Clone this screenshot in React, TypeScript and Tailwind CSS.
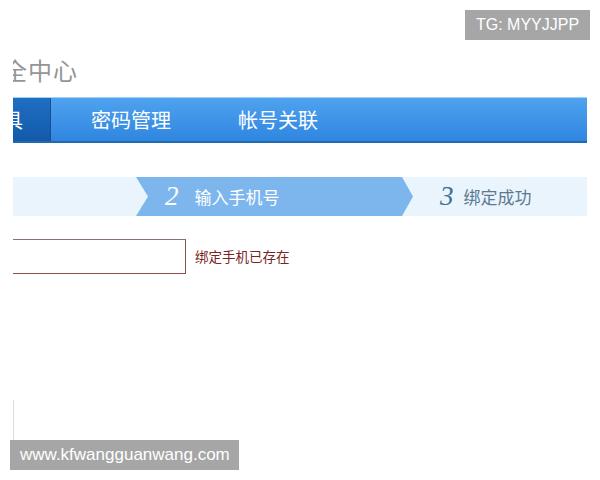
const cjk = "font-['Noto_Sans_CJK_SC','Noto_Sans',sans-serif]"

const Watermark = ({ text, className }: { text: string; className: string }) => (
    <div
        className={`absolute bg-[#a6a6a6] text-white leading-[30px] font-['Liberation_Sans',Arial,sans-serif] ${className}`}
    >
        {text}
    </div>
)

export default function App() {
    return (
        <div className={`relative w-[600px] h-[480px] overflow-hidden bg-white ${cjk}`}>
            <div className="ml-[13px] w-[574px] pt-[54px] overflow-hidden">
                {/* Title, cut off on the left */}
                <div className="ml-[-35px] h-[32px] leading-[32px] text-[24px] tracking-[1px] text-[#959595] whitespace-nowrap">
                    安全中心
                </div>

                {/* Nav tabs */}
                <div className="mt-[11px] h-[46px] flex border-t border-t-[#9fd3f6] border-b-2 border-b-[#2369b0] bg-gradient-to-b from-[#4ea2ef] to-[#2f86e0] text-white text-[20px]">
                    <div className="ml-[-82px] w-[120px] flex items-center justify-end pr-[27px] bg-gradient-to-b from-[#1f6fc4] to-[#135aa8] border-r border-r-[#1a4f8f] whitespace-nowrap">
                        安全工具
                    </div>
                    <div className="ml-[40px] flex items-center whitespace-nowrap">密码管理</div>
                    <div className="ml-[67px] flex items-center whitespace-nowrap">帐号关联</div>
                </div>

                {/* Steps */}
                <div className="mt-[34px] h-[39px] flex bg-[#eaf4fd]">
                    <div className="w-[123px] shrink-0" />
                    <div className="w-[277px] shrink-0 flex items-center pl-[29px] bg-[#7cb6ec] text-white [clip-path:polygon(0_0,266px_0,100%_50%,266px_100%,0_100%,12px_50%)]">
                        <span className="text-[27px] italic font-['Liberation_Serif',serif] leading-none">2</span>
                        <span className="ml-[16px] text-[17px]">输入手机号</span>
                    </div>
                    <div className="ml-[27px] flex items-center">
                        <span className="text-[27px] italic font-['Liberation_Serif',serif] leading-none text-[#3d6f92]">3</span>
                        <span className="ml-[10px] text-[17px] text-[#5b7a90]">绑定成功</span>
                    </div>
                </div>

                {/* Phone input */}
                <div className="mt-[23px] h-[35px] flex items-center">
                    <div className="ml-[-40px] w-[213px] h-[35px] border border-[#8c4e4e] border-t-[#8a7070] bg-white" />
                    <span className="ml-[9px] text-[13.5px] text-[#7a2424]">绑定手机已存在</span>
                </div>

                <div className="mt-[126px] h-[40px] border-l border-l-[#dcdcdc]" />
            </div>

            <Watermark text="TG: MYYJJPP" className="left-[465px] top-[10px] w-[125px] text-center text-[16px]" />
            <Watermark text="www.kfwangguanwang.com" className="left-[10px] top-[440px] w-[229px] pl-[10px] text-[17px]" />
        </div>
    )
}
